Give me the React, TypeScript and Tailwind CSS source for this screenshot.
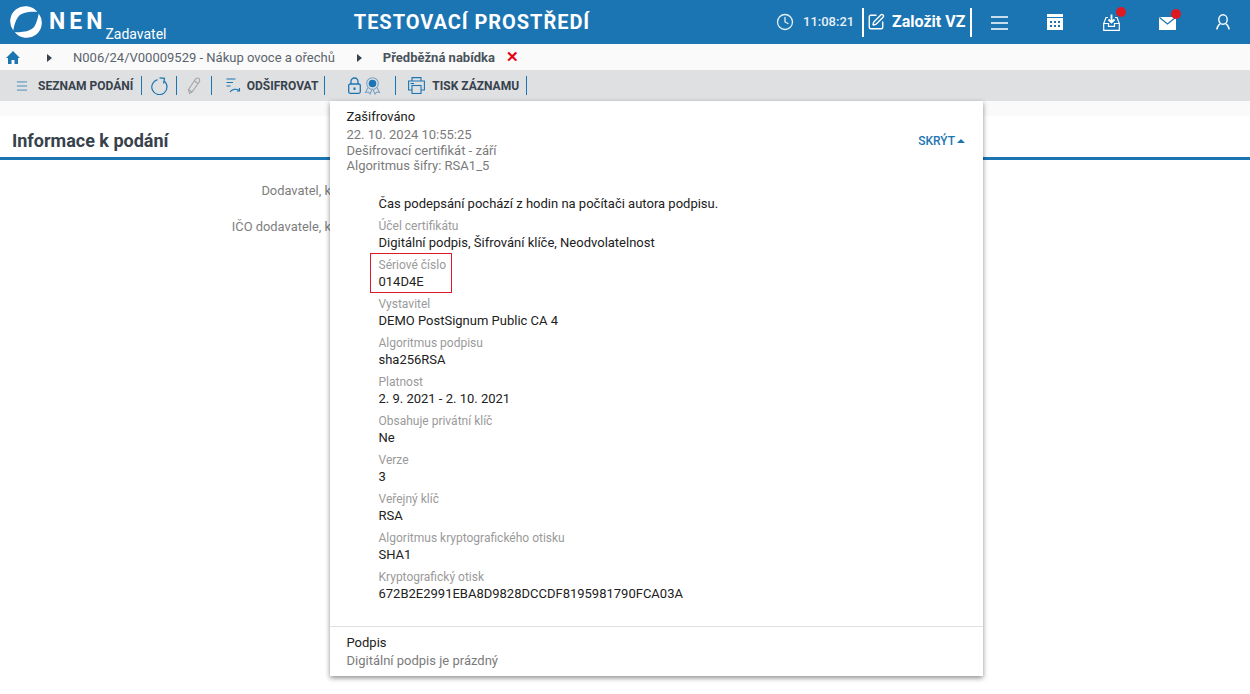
import { Clock, Menu, SquarePen } from 'lucide-react';

const FIELDS = [
  ['Účel certifikátu', 'Digitální podpis, Šifrování klíče, Neodvolatelnost'],
  ['Sériové číslo', '014D4E'],
  ['Vystavitel', 'DEMO PostSignum Public CA 4'],
  ['Algoritmus podpisu', 'sha256RSA'],
  ['Platnost', '2. 9. 2021 - 2. 10. 2021'],
  ['Obsahuje privátní klíč', 'Ne'],
  ['Verze', '3'],
  ['Veřejný klíč', 'RSA'],
  ['Algoritmus kryptografického otisku', 'SHA1'],
  ['Kryptografický otisk', '672B2E2991EBA8D9828DCCDF8195981790FCA03A'],
];

function Sep() {
  return <div className="mr-[0.5px] h-[19px] w-px shrink-0 bg-[#1c75b3]" />;
}

function Arrow() {
  return <span className="block h-0 w-0 shrink-0 border-y-[4px] border-l-[5px] border-y-transparent border-l-[#37424c]" />;
}

function Dot() {
  return <span className="absolute -top-[7px] -right-[6px] h-[10px] w-[10px] rounded-full bg-[#dd1a22]" />;
}

function Logo() {
  const swoosh = 'M3.500 26 A16 16 0 0 1 29 6.500 C23 5.500 14 6.500 9.500 10.500 C6.500 13.500 4.500 20 3.500 26 Z';
  return (
    <svg width="32" height="32" viewBox="0 0 34 34" fill="white">
      <path d={swoosh} />
      <path d={swoosh} transform="rotate(180 17 17)" />
    </svg>
  );
}

export default function App() {
  return (
    <div className="relative h-[694px] w-[1250px] overflow-hidden bg-white font-['Roboto',sans-serif] text-[#37424c]">
      {/* Header */}
      <div className="flex h-11 items-center bg-[#1c75b3] text-white">
        <div className="flex w-[302px] shrink-0 items-center pl-[10px]">
          <Logo />
          <span className="-mt-[2px] ml-[7px] text-[23px] font-bold leading-none tracking-[4px]">NEN</span>
          <span className="-ml-[1px] mt-[23px] text-[14px] leading-none">Zadavatel</span>
        </div>
        <div className="w-[340px] shrink-0 text-center text-[20px] font-bold tracking-[0.95px]">TESTOVACÍ PROSTŘEDÍ</div>
        <div className="flex flex-1 items-center pl-[134px]">
          <Clock size={18} strokeWidth={1.7} className="text-[#e6f0f7]" />
          <span className="ml-[9px] w-[50px] text-[13px] font-medium text-[#e6f0f7]">11:08:21</span>
          <div className="ml-[9px] h-[29px] w-[2px] bg-white" />
          <SquarePen size={18} strokeWidth={1.8} className="ml-[3px]" />
          <span className="ml-[7px] text-[16px] font-bold">Založit VZ</span>
          <div className="ml-[5px] h-[29px] w-[2px] bg-white" />
          <svg width="17" height="14" viewBox="0 0 17 14" stroke="white" strokeWidth="1.500" className="ml-[19px] mt-[1px]">
            <path d="M0 1H17M0 7H17M0 13H17" />
          </svg>
          <svg width="16" height="16" viewBox="0 0 16 16" fill="white" className="ml-[39px]">
            <path d="M0 0H16V3H0Z" />
            <path fillRule="evenodd" d="M0 4H16V16H0ZM3 7H5V9H3ZM7 7H9V9H7ZM11 7H13V9H11ZM3 11H5V13H3ZM7 11H9V13H7ZM11 11H13V13H11Z" />
          </svg>
          <div className="relative ml-[40px] flex">
            <svg width="17" height="17" viewBox="0 0 17 17" fill="none" stroke="white" strokeWidth="1.200">
              <path d="M5 3.500H3L.7 9.500V16.300H16.300V9.500L14 3.500H12" />
              <path d="M.7 9.500H5.500V12.300H11.500V9.500H16.300" />
              <path d="M8.500 .5V8.500M5.500 5.500L8.500 8.500L11.500 5.500" strokeWidth="1.800" />
            </svg>
            <Dot />
          </div>
          <div className="relative ml-[39px] flex">
            <svg width="17" height="13" viewBox="0 0 17 13" fill="white" className="mt-[2px]">
              <path d="M0 0H17V13H0Z" />
              <path d="M.5 .5L8.500 7L16.500 .5" fill="none" stroke="#1c75b3" strokeWidth="1.200" />
            </svg>
            <span className="absolute -top-[6px] -right-[5px] h-[10px] w-[10px] rounded-full bg-[#dd1a22]" />
          </div>
          <svg width="14" height="16" viewBox="0 0 14 16" fill="none" stroke="white" strokeWidth="1.400" className="ml-[40px]">
            <ellipse cx="7" cy="5.500" rx="4.200" ry="4.800" />
            <path d="M.8 15.500C1 12 3 10.500 4.500 9.500M13.200 15.500C13 12 11 10.500 9.500 9.500" />
          </svg>
        </div>
      </div>

      {/* Breadcrumb */}
      <div className="flex h-[26px] items-center bg-[#fafafa] pt-[1px] text-[13px]">
        <svg width="14" height="13" viewBox="0 0 14 13" fill="#1c75b3" className="ml-[6px]">
          <path d="M7 0L14 7H12V13H8.500V9H5.500V13H2V7H0Z" />
        </svg>
        <div className="ml-[27px]"><Arrow /></div>
        <span className="ml-[21px] text-[#5a646d]">N006/24/V00009529 - Nákup ovoce a ořechů</span>
        <div className="ml-[22px]"><Arrow /></div>
        <span className="ml-[21px] font-bold text-[#4a545d]">Předběžná nabídka</span>
        <span className="ml-[11px] text-[15px] font-bold leading-none text-[#e3000f]">✕</span>
      </div>

      {/* Toolbar */}
      <div className="flex h-[31px] items-center bg-[#dfe0e2] text-[12px] font-bold">
        <Menu size={14} strokeWidth={1.3} className="ml-[15px] text-[#1c75b3]" />
        <span className="ml-[9px] mr-[8px]">SEZNAM PODÁNÍ</span>
        <Sep />
        <svg width="17" height="18" viewBox="0 0 17 18" fill="none" stroke="#1c75b3" strokeWidth="1.200" className="mx-[8px]">
          <path d="M6.500 2.700A7.600 7.600 0 1 0 13 4" />
          <path d="M8.500 .8L13.500 1.300L12.500 6.500" />
        </svg>
        <Sep />
        <svg width="14" height="18" viewBox="0 0 14 18" fill="none" stroke="#a2a6aa" strokeWidth="1.100" className="mx-[10px]">
          <path d="M2.500 16.500L1.500 12.500L9 1.500Q10.500 .5 12 1.500Q13 3 12.500 4.500L5 15Z" />
          <path d="M1.500 12.500L5 15M7.500 4L11 6.500" />
        </svg>
        <Sep />
        <svg width="16" height="15" viewBox="0 0 16 15" fill="none" stroke="#1c75b3" strokeWidth="1.100" className="ml-[13px]">
          <path d="M.5 1H9.500M.5 4.500H7M.5 8H4.500" />
          <path d="M4 14C6 11 10 10.500 13.500 12.500" />
          <path d="M13.500 10V13H10.800" />
        </svg>
        <span className="ml-[5px] mr-[6px]">ODŠIFROVAT</span>
        <Sep />
        <svg width="13" height="17" viewBox="0 0 13 17" fill="none" stroke="#1c75b3" strokeWidth="1.300" className="ml-[22px]">
          <rect x=".7" y="7" width="11.600" height="9.300" rx="1.500" />
          <path d="M3 7V4.500A3.500 3.500 0 0 1 10 4.500V7" />
          <path d="M6.500 10.500V13" strokeWidth="2" />
        </svg>
        <svg width="17" height="18" viewBox="0 0 17 18" fill="none" stroke="#7ba3c4" strokeWidth="1.100" className="ml-[3px]">
          <circle cx="8.500" cy="6.500" r="5.800" />
          <circle cx="8.500" cy="6.500" r="3.800" fill="#1c75b3" stroke="none" />
          <path d="M4 10.500L1.500 15.500L4.500 15L6 17L8 12.500M13 10.500L15.500 15.500L12.500 15L11 17L9 12.500" />
        </svg>
        <div className="ml-[14px]"><Sep /></div>
        <svg width="17" height="17" viewBox="0 0 17 17" fill="none" stroke="#1c75b3" strokeWidth="1.100" className="ml-[12px]">
          <path d="M4 4V.6H13V4" />
          <path d="M4 13H.6V4H16.400V13H13" />
          <rect x="4" y="8.500" width="9" height="8" />
          <path d="M2.500 6.500H6" />
        </svg>
        <span className="ml-[7px] mr-[7px]">TISK ZÁZNAMU</span>
        <Sep />
      </div>

      <div className="h-[15px] bg-[#fafafa]" />

      {/* Heading */}
      <div className="flex h-[44px] items-center border-b-[3px] border-[#1c75b3] pl-3 pt-[8px] text-[18px] font-bold">
        Informace k podání
      </div>
      <div className="w-[331px] pt-[21px] text-right text-[12.900px] text-[#7d7d7d]">
        <div className="whitespace-nowrap">Dodavatel, k</div>
        <div className="mt-[17px] whitespace-nowrap">IČO dodavatele, k</div>
      </div>

      {/* Popover */}
      <div className="absolute left-[330px] top-[101px] flex h-[575px] w-[653px] flex-col bg-white shadow-[0_2px_5px_rgba(0,0,0,0.45)]">
        <div className="flex pl-[16.500px] pr-[17px] pt-[8px]">
          <div className="flex-1">
            <div className="text-[13px] leading-[15px] text-[#212121]">Zašifrováno</div>
            <div className="mt-[3px] text-[13px] leading-[15.500px] text-[#7b7b7b]">
              <div>22. 10. 2024 10:55:25</div>
              <div>Dešifrovací certifikát - září</div>
              <div>Algoritmus šifry: RSA1_5</div>
            </div>
          </div>
          <div className="mr-[1px] mt-[25px] flex h-[14px] items-center text-[12px] font-medium text-[#1c75b3]">
            SKRÝT
            <span className="ml-[2px] h-0 w-0 border-x-[4px] border-b-[4px] border-x-transparent border-b-[#1c75b3]" />
          </div>
        </div>

        <div className="ml-[48.500px] mt-[22px] text-[13px] leading-[15px] text-[#212121]">
          Čas podepsání pochází z hodin na počítači autora podpisu.
        </div>
        <div className="mt-[5px] flex-1 pl-[48.500px]">
          {FIELDS.map(([label, value]) => (
            <div key={label} className="relative h-[39px] pt-[3px]">
              {label === 'Sériové číslo' && (
                <div className="absolute -left-[8.500px] -top-[2px] h-[40px] w-[82px] border border-[#dd1a2a]" />
              )}
              <div className="text-[12px] leading-[15px] text-[#9a9a9a]">{label}</div>
              <div className="mt-[1px] text-[13px] leading-[15px] text-[#212121]">{value}</div>
            </div>
          ))}
        </div>
        <div className="h-[50px] border-t border-[#e0e0e0] px-[16.500px] pt-[8px]">
          <div className="text-[13px] leading-[15px] text-[#212121]">Podpis</div>
          <div className="mt-[3px] text-[13px] leading-[15px] text-[#7b7b7b]">Digitální podpis je prázdný</div>
        </div>
      </div>
    </div>
  );
}
